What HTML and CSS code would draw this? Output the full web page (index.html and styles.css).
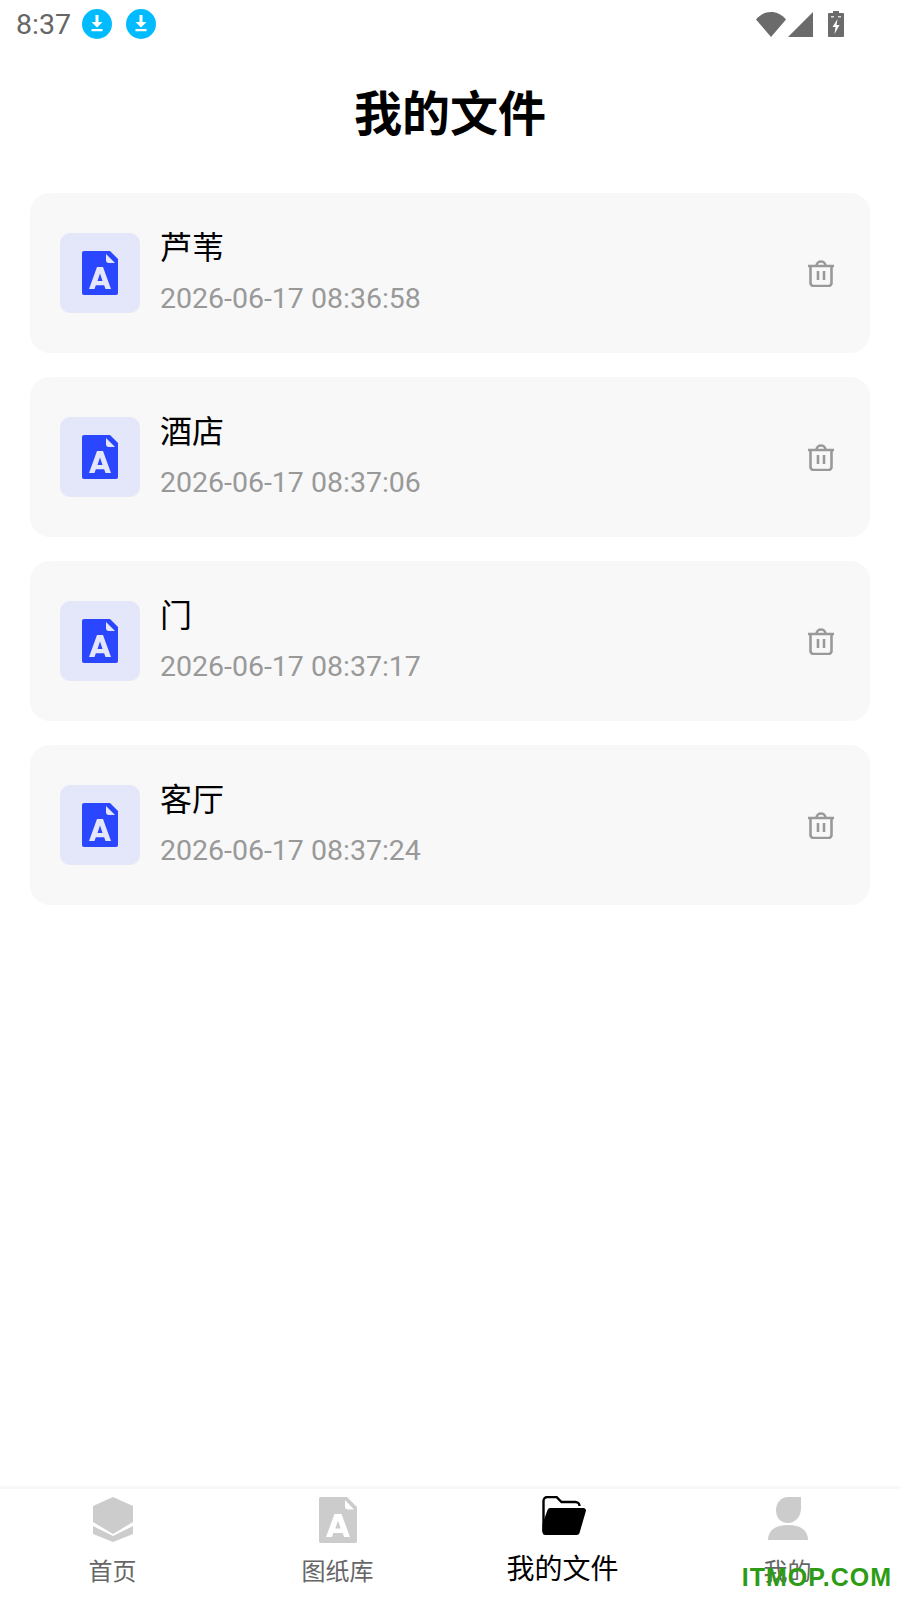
FILE: index.html
```html
<!DOCTYPE html>
<html lang="zh-CN">
<head>
  <meta charset="UTF-8">
  <meta name="viewport" content="width=device-width, initial-scale=1.0">
  <title>我的文件</title>
  <link rel="stylesheet" href="styles.css">
</head>
<body>
  <div class="page">
    <div class="status-bar">
      <span class="status-time">8:37</span>
      <svg class="status-dl" viewBox="0 0 30 30"><circle cx="15" cy="15" r="15" fill="#00bcff"/><path d="M13.500 6h3v7h4L15 18.500 9.500 13h4zM9.500 20h11v2.200h-11z" fill="#fff"/></svg>
      <svg class="status-dl" viewBox="0 0 30 30"><circle cx="15" cy="15" r="15" fill="#00bcff"/><path d="M13.500 6h3v7h4L15 18.500 9.500 13h4zM9.500 20h11v2.200h-11z" fill="#fff"/></svg>
      <div class="status-right">
        <svg class="status-wifi" viewBox="0 0 32 26"><path d="M1 8.500C9 -1.500 23 -1.500 31 8.500L16 26z" fill="#6b6b6b"/></svg>
        <svg class="status-signal" viewBox="0 0 25 25"><path d="M25 0v25H0z" fill="#6b6b6b"/></svg>
        <svg class="status-battery" viewBox="0 0 16 26"><path d="M5 0h6v2h4a1 1 0 0 1 1 1v22a1 1 0 0 1-1 1H1a1 1 0 0 1-1-1V3a1 1 0 0 1 1-1h4z" fill="#6b6b6b"/><path d="M9.500 8 4.500 16h3l-1 7 5-9h-3l1-6z" fill="#fff"/><path d="M3 5h3v1.500H3zM10 5h3v1.500h-3z" fill="#ddd"/></svg>
      </div>
    </div>

    <h1 class="page-title">我的文件</h1>

    <div class="file-list">
      <div class="file-card">
        <div class="file-icon">
          <svg viewBox="0 0 36 44"><path d="M2 0h26l8 8v34a2 2 0 0 1-2 2H2a2 2 0 0 1-2-2V2a2 2 0 0 1 2-2z" fill="#2b46ff"/><path d="M24 3l9 9h-6a3 3 0 0 1-3-3z" fill="#e4e7fa"/><path d="M15 16h6l8 22h-5.500l-1.300-3.800h-8.400L12.500 38H7zM18 22.500 15.500 30h5z" fill="#e4e7fa" fill-rule="evenodd"/></svg>
        </div>
        <div class="file-info">
          <div class="file-name">芦苇</div>
          <div class="file-date">2026-06-17 08:36:58</div>
        </div>
        <svg class="file-delete" viewBox="0 0 28 28"><path d="M1 7h26M9.500 7C9.500 1 18.500 1 18.500 7M3.500 7v17a3 3 0 0 0 3 3h15a3 3 0 0 0 3-3V7M11 12v9M17 12v9" fill="none" stroke="#999" stroke-width="2.600"/></svg>
      </div>
      <div class="file-card">
        <div class="file-icon">
          <svg viewBox="0 0 36 44"><path d="M2 0h26l8 8v34a2 2 0 0 1-2 2H2a2 2 0 0 1-2-2V2a2 2 0 0 1 2-2z" fill="#2b46ff"/><path d="M24 3l9 9h-6a3 3 0 0 1-3-3z" fill="#e4e7fa"/><path d="M15 16h6l8 22h-5.500l-1.300-3.800h-8.400L12.500 38H7zM18 22.500 15.500 30h5z" fill="#e4e7fa" fill-rule="evenodd"/></svg>
        </div>
        <div class="file-info">
          <div class="file-name">酒店</div>
          <div class="file-date">2026-06-17 08:37:06</div>
        </div>
        <svg class="file-delete" viewBox="0 0 28 28"><path d="M1 7h26M9.500 7C9.500 1 18.500 1 18.500 7M3.500 7v17a3 3 0 0 0 3 3h15a3 3 0 0 0 3-3V7M11 12v9M17 12v9" fill="none" stroke="#999" stroke-width="2.600"/></svg>
      </div>
      <div class="file-card">
        <div class="file-icon">
          <svg viewBox="0 0 36 44"><path d="M2 0h26l8 8v34a2 2 0 0 1-2 2H2a2 2 0 0 1-2-2V2a2 2 0 0 1 2-2z" fill="#2b46ff"/><path d="M24 3l9 9h-6a3 3 0 0 1-3-3z" fill="#e4e7fa"/><path d="M15 16h6l8 22h-5.500l-1.300-3.800h-8.400L12.500 38H7zM18 22.500 15.500 30h5z" fill="#e4e7fa" fill-rule="evenodd"/></svg>
        </div>
        <div class="file-info">
          <div class="file-name">门</div>
          <div class="file-date">2026-06-17 08:37:17</div>
        </div>
        <svg class="file-delete" viewBox="0 0 28 28"><path d="M1 7h26M9.500 7C9.500 1 18.500 1 18.500 7M3.500 7v17a3 3 0 0 0 3 3h15a3 3 0 0 0 3-3V7M11 12v9M17 12v9" fill="none" stroke="#999" stroke-width="2.600"/></svg>
      </div>
      <div class="file-card">
        <div class="file-icon">
          <svg viewBox="0 0 36 44"><path d="M2 0h26l8 8v34a2 2 0 0 1-2 2H2a2 2 0 0 1-2-2V2a2 2 0 0 1 2-2z" fill="#2b46ff"/><path d="M24 3l9 9h-6a3 3 0 0 1-3-3z" fill="#e4e7fa"/><path d="M15 16h6l8 22h-5.500l-1.300-3.800h-8.400L12.500 38H7zM18 22.500 15.500 30h5z" fill="#e4e7fa" fill-rule="evenodd"/></svg>
        </div>
        <div class="file-info">
          <div class="file-name">客厅</div>
          <div class="file-date">2026-06-17 08:37:24</div>
        </div>
        <svg class="file-delete" viewBox="0 0 28 28"><path d="M1 7h26M9.500 7C9.500 1 18.500 1 18.500 7M3.500 7v17a3 3 0 0 0 3 3h15a3 3 0 0 0 3-3V7M11 12v9M17 12v9" fill="none" stroke="#999" stroke-width="2.600"/></svg>
      </div>
    </div>

    <div class="tab-bar">
      <div class="tab">
        <svg class="tab-icon" viewBox="0 0 46 46"><path d="M23 0l20 9v16L23 37 3 25V9z" fill="#ccc"/><path d="M3 29l20 10 20-10v8L23 45 3 37z" fill="#ccc"/></svg>
        <span>首页</span>
      </div>
      <div class="tab">
        <svg class="tab-icon" viewBox="0 0 46 46"><path d="M6 0h26l10 10v34a2 2 0 0 1-2 2H6a2 2 0 0 1-2-2V2a2 2 0 0 1 2-2z" fill="#ccc"/><path d="M30 3l9 9.500h-6a3 3 0 0 1-3-3z" fill="#fff"/><path d="M19.500 17h7L35 40h-6l-1.300-4h-9.400L17 40h-6zM23 23.500l-2.700 8h5.400z" fill="#fff" fill-rule="evenodd"/></svg>
        <span>图纸库</span>
      </div>
      <div class="tab tab-active">
        <svg class="tab-icon" viewBox="-1.500 0 46 46"><path d="M2 36V5a4 4 0 0 1 4-4h9l5 5h14a4 4 0 0 1 4 4" fill="none" stroke="#000" stroke-width="2.400"/><path d="M9 12h33a2.500 2.500 0 0 1 2.400 3l-6.400 22a3 3 0 0 1-3 2H4a3 3 0 0 1-3-3v-8l5-14a3 3 0 0 1 3-2z" fill="#000"/></svg>
        <span>我的文件</span>
      </div>
      <div class="tab">
        <svg class="tab-icon" viewBox="0 0 46 46"><path d="M23 0h13v11c0 8-5 15-13 15s-12-6-12-13S16 0 23 0z" fill="#ccc"/><path d="M3 43c0-10 8-15 20-15s20 5 20 15z" fill="#ccc"/></svg>
        <span>我的</span>
      </div>
    </div>

    <div class="watermark">ITMOP.COM</div>
  </div>
</body>
</html>
```

FILE: styles.css
```css
body {
  margin: 0;
  background: #fff;
  font-family: Roboto, "Noto Sans CJK SC", sans-serif;
}
.page {
  position: relative;
  display: flex;
  flex-direction: column;
  height: 1600px;
  overflow: hidden;
}
.status-bar {
  display: flex;
  align-items: center;
  height: 48px;
  padding: 0 56px 0 16px;
  color: #666;
}
.status-time {
  font-size: 28.500px;
  margin-right: 11px;
}
.status-dl {
  width: 30px;
  height: 30px;
  margin-right: 14px;
}
.status-right {
  display: flex;
  align-items: center;
  margin-left: auto;
}
.status-wifi {
  width: 32px;
  height: 26px;
}
.status-signal {
  width: 25px;
  height: 25px;
  margin-left: 1px;
}
.status-battery {
  width: 16px;
  height: 26px;
  margin-left: 15px;
}
.page-title {
  margin: 0;
  height: 132px;
  line-height: 134px;
  text-align: center;
  font-size: 48px;
  font-weight: 700;
  color: #000;
}
.file-list {
  display: flex;
  flex-direction: column;
  gap: 24px;
  padding: 13px 30px 0;
}
.file-card {
  display: flex;
  align-items: center;
  height: 160px;
  padding: 0 35px 0 30px;
  background: #f8f8f8;
  border-radius: 20px;
}
.file-icon {
  display: flex;
  align-items: center;
  justify-content: center;
  width: 80px;
  height: 80px;
  background: #e4e7fa;
  border-radius: 10px;
}
.file-icon svg {
  width: 36px;
  height: 44px;
}
.file-info {
  flex: 1;
  margin-left: 20px;
}
.file-name {
  font-size: 32px;
  line-height: 42px;
  color: #000;
}
.file-date {
  font-size: 28.500px;
  line-height: 40px;
  margin-top: 10px;
  color: #999;
}
.file-delete {
  width: 28px;
  height: 28px;
}
.tab-bar {
  display: flex;
  margin-top: auto;
  height: 111px;
  border-top: 3px solid #f8f8f8;
}
.tab {
  flex: 1;
  display: flex;
  flex-direction: column;
  align-items: center;
  padding-top: 8px;
  font-size: 24px;
  line-height: 34px;
  color: #666;
}
.tab-icon {
  width: 46px;
  height: 46px;
  margin-bottom: 12px;
}
.tab-active {
  padding-top: 7px;
  font-size: 28px;
  line-height: 40px;
  color: #000;
}
.tab-active .tab-icon {
  margin-bottom: 8px;
}
.watermark {
  position: absolute;
  right: 8px;
  bottom: 8px;
  font-family: "Liberation Sans", sans-serif;
  font-size: 25px;
  font-weight: 700;
  letter-spacing: 1px;
  color: #2d9c14;
}
```
